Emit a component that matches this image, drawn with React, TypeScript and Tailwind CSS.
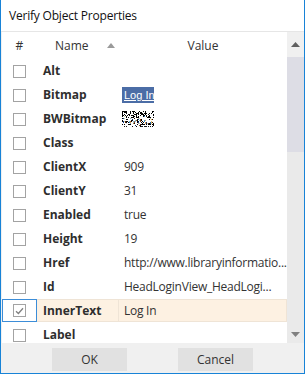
import React from 'react';

type Row = { name: string; value?: string; kind?: 'bitmap' | 'bw'; checked?: boolean; selected?: boolean };

const ROWS: Row[] = [
  { name: 'Alt' },
  { name: 'Bitmap', kind: 'bitmap' },
  { name: 'BWBitmap', kind: 'bw' },
  { name: 'Class' },
  { name: 'ClientX', value: '909' },
  { name: 'ClientY', value: '31' },
  { name: 'Enabled', value: 'true' },
  { name: 'Height', value: '19' },
  { name: 'Href', value: 'http://www.libraryinformatio...' },
  { name: 'Id', value: 'HeadLoginView_HeadLogi...' },
  { name: 'InnerText', value: 'Log In', checked: true, selected: true },
  { name: 'Label' },
];

const FONT = '[font-family:"Open_Sans","Noto_Sans",sans-serif]';

// dithered black/white snapshot of the link, seeded so it draws the same every time
function BWBitmap() {
  const dots: React.ReactElement[] = [];
  let seed = 7;
  for (let y = 0; y < 16; y++) {
    for (let x = 0; x < 32; x++) {
      seed = (seed * 1103515245 + 12345) & 0x7fffffff;
      if (seed % 100 < 42) dots.push(<rect key={`${x}-${y}`} x={x} y={y} width="1" height="1" fill="#000" />);
    }
  }
  return (
    <svg width="32" height="16" viewBox="0 0 32 16" className="block">
      <rect width="32" height="16" fill="#fff" />
      {dots}
      <text x="1" y="13" fontSize="11" fill="#fff" fontFamily="Liberation Sans, sans-serif" textDecoration="underline">
        Log In
      </text>
    </svg>
  );
}

function Check({ checked }: { checked?: boolean }) {
  return (
    <div className="w-[13px] h-[13px] border border-[#a3a3a3] bg-white flex items-center justify-center">
      {checked && (
        <svg width="9" height="8" viewBox="0 0 9 8">
          <path d="M1 4.2 L3.4 6.5 L8 1.2" fill="none" stroke="#808080" strokeWidth="1.3" />
        </svg>
      )}
    </div>
  );
}

function GridRow({ row }: { row: Row }) {
  const sel = row.selected;
  return (
    <div className="grid grid-cols-[35px_82px_1fr] h-[24px] shrink-0">
      <div className={`flex items-center justify-center ${sel ? 'border border-[#3c8dd8] h-[23px]' : ''}`}>
        <Check checked={row.checked} />
      </div>
      <div className={`flex items-center pl-[6px] font-bold text-[#2e2e2e] ${sel ? 'bg-[#fdf1e2] border-y border-r border-[#efe4d6] h-[23px]' : ''}`}>
        {row.name}
      </div>
      <div className={`flex items-center pl-[5px] text-[#333] tracking-[-0.25px] whitespace-nowrap overflow-hidden ${sel ? 'bg-[#fdf1e2] border-y border-r border-[#efe4d6] h-[23px]' : ''}`}>
        {row.kind === 'bitmap' && (
          <span className="bg-[#4b6da6] text-white underline px-[2px] leading-[16px] h-[16px] w-[32px] -ml-[2px] tracking-normal [font-family:'Liberation_Sans',sans-serif] text-[11px]">
            Log In
          </span>
        )}
        {row.kind === 'bw' && (
          <span className="-ml-[2px]">
            <BWBitmap />
          </span>
        )}
        {!row.kind && row.value}
      </div>
    </div>
  );
}

export default function App() {
  return (
    <div className={`w-[306px] h-[376px] bg-white ${FONT} text-[12px]`}>
      <div className="w-[305px] h-[374px] border-x border-b border-[#1883d7] bg-[#f0f0f0] flex flex-col">
        <div className="h-[32px] shrink-0 bg-white border-b border-[#e6e6e6] flex items-center pl-[8px] text-[#111] tracking-[-0.2px]">
          Verify Object Properties
        </div>

        <div className="h-[311px] shrink-0 flex pl-px">
          <div className="w-[285px] bg-white flex flex-col overflow-hidden">
            <div className="grid grid-cols-[35px_82px_1fr] h-[27px] shrink-0 items-center text-[#333]">
              <div className="text-center">#</div>
              <div className="flex items-center pl-[18px]">
                Name
                <svg width="8" height="5" viewBox="0 0 8 5" className="ml-[18px]">
                  <path d="M0 5 L4 0 L8 5 Z" fill="#9a9a9a" />
                </svg>
              </div>
              <div className="text-center">Value</div>
            </div>
            {ROWS.map((r) => (
              <GridRow key={r.name} row={r} />
            ))}
          </div>

          <div className="w-[17px] flex flex-col bg-[#eaeaea]">
            <div className="h-[25px] bg-[#f0f0f0] flex items-center justify-center">
              <svg width="9" height="5" viewBox="0 0 9 5">
                <path d="M0 5 L4.5 0 L9 5 Z" fill="#606060" />
              </svg>
            </div>
            <div className="h-[95px] bg-[#dddde5]" />
            <div className="flex-1" />
            <div className="h-[17px] flex items-center justify-center">
              <svg width="9" height="5" viewBox="0 0 9 5">
                <path d="M0 0 L4.5 5 L9 0 Z" fill="#808080" />
              </svg>
            </div>
          </div>
        </div>

        <div className="flex justify-center gap-[51px] pt-[5px]">
          <button className="w-[75px] h-[23px] bg-[#e1e1e1] text-[#333]">OK</button>
          <button className="w-[75px] h-[23px] bg-[#e1e1e1] text-[#333]">Cancel</button>
        </div>
      </div>
    </div>
  );
}
